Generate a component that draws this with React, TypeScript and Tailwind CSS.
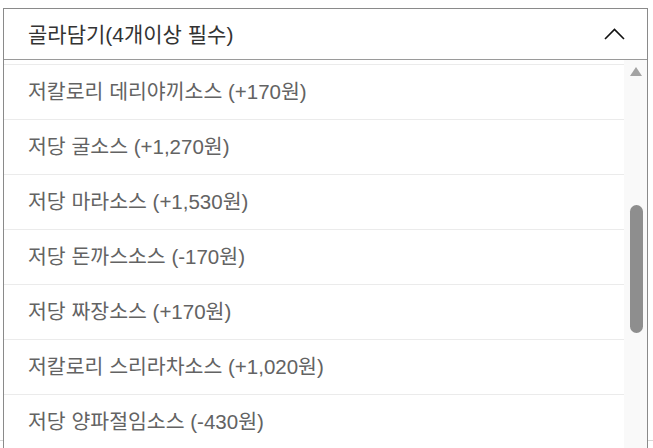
const ITEMS = [
  "저칼로리 데리야끼소스 (+170원)",
  "저당 굴소스 (+1,270원)",
  "저당 마라소스 (+1,530원)",
  "저당 돈까스소스 (-170원)",
  "저당 짜장소스 (+170원)",
  "저칼로리 스리라차소스 (+1,020원)",
  "저당 양파절임소스 (-430원)",
];

function ChevronUp() {
  return (
    <svg width="21" height="12" viewBox="0 0 21 12" fill="none">
      <path d="M1 11 L10.5 1.5 L20 11" stroke="#111" strokeWidth="1.6" />
    </svg>
  );
}

function App() {
  return (
    <div className="relative h-[448px] w-[653px] overflow-hidden bg-white font-['Liberation_Sans','Noto_Sans_CJK_KR',sans-serif]">
      {/* page content underneath the open dropdown */}
      <div className="absolute inset-x-0 top-[440px] h-px bg-[#d6d6d6]" />

      <div className="absolute left-[3px] top-2 flex h-[470px] w-[645px] flex-col border border-[#8a8a8a] bg-white">
        <div className="flex h-[51px] shrink-0 items-center justify-between border-b border-[#9a9a9a] pl-6 pr-[22px]">
          <span className="text-[21px] leading-none text-[#333]">골라담기(4개이상 필수)</span>
          <ChevronUp />
        </div>

        <div className="flex min-h-0 flex-1 overflow-hidden">
          <ul className="flex-1">
            {/* bottom edge of the row scrolled out of view */}
            <li className="h-[5px] border-b border-[#ebebeb]" />
            {ITEMS.map((item) => (
              <li
                key={item}
                className="flex h-[55px] items-center border-b border-[#ebebeb] pl-6 text-[20.5px] leading-none text-[#636363]">
                {item}
              </li>
            ))}
          </ul>

          <div className="flex w-[23px] shrink-0 flex-col items-center bg-[#f9f9f9]">
            <div className="mt-[7px] h-0 w-0 border-x-[6px] border-b-[9px] border-x-transparent border-b-[#a3a3a3]" />
            <div className="ml-px mt-[129px] h-[128px] w-[13px] rounded-full bg-[#8e8e8e]" />
          </div>
        </div>
      </div>
    </div>
  );
}

export default App;
